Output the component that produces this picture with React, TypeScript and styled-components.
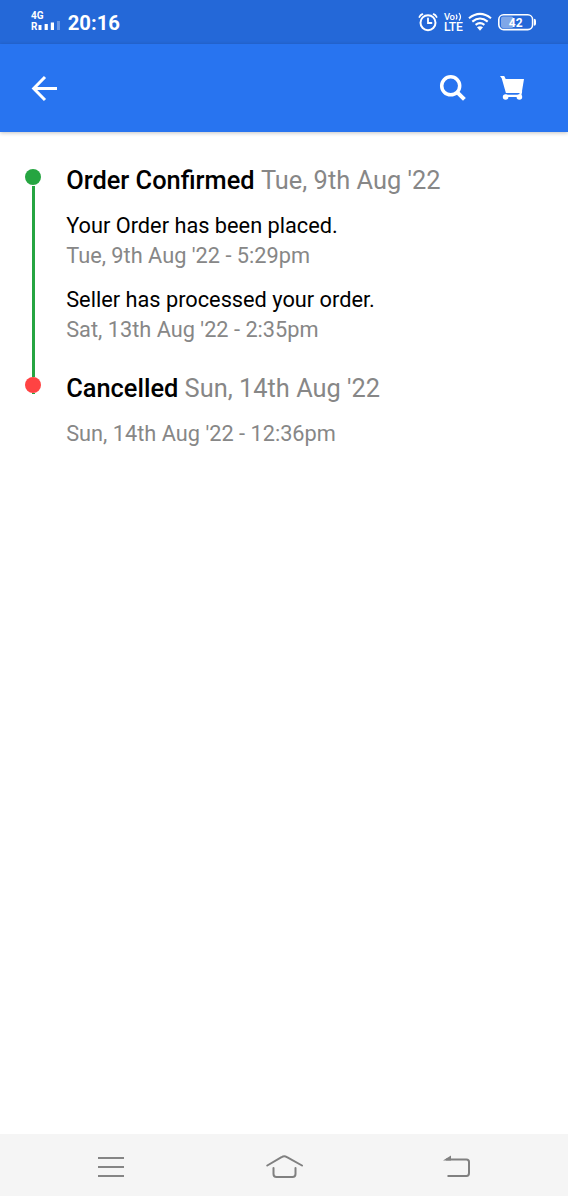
import React from "react";
import styled, { createGlobalStyle } from "styled-components";

const GlobalStyle = createGlobalStyle`
  *, *::before, *::after { box-sizing: border-box; }
  body { margin: 0; background: #fff; }
`;

const Screen = styled.div`
  width: 568px;
  height: 1200px;
  display: flex;
  flex-direction: column;
  padding-bottom: 4px;
  overflow: hidden;
  background: #fff;
  font-family: Roboto, "Liberation Sans", sans-serif;
`;

const StatusBar = styled.div`
  height: 44px;
  flex: none;
  display: flex;
  justify-content: space-between;
  padding: 0 30px 0 31px;
  background: #2468d8;
  color: #fff;
`;

const StatusGroup = styled.div`
  display: flex;
  align-items: flex-start;
`;

const Network = styled.div`
  display: flex;
  flex-direction: column;
  padding-top: 10px;
  font-size: 10px;
  line-height: 11px;
  font-weight: 700;
`;

const SignalRow = styled.div`
  display: flex;
  height: 11px;
`;

const Clock = styled.span`
  margin-left: 7.3px;
  padding-top: 11px;
  font-size: 20.3px;
  line-height: 24px;
  font-weight: 700;
`;

const Volte = styled.div`
  width: 20px;
  margin: 12px 4px 0 6.5px;
  font-size: 12.2px;
  line-height: 13px;
  font-weight: 500;
  letter-spacing: -0.3px;
  white-space: nowrap;
`;

const VolteTop = styled.div`
  display: flex;
  height: 9px;
  font-size: 9.5px;
  line-height: 9px;
`;

const Icon = styled.svg`
  display: block;
  flex: none;
`;

const BatteryIcon = styled(Icon)`
  margin-left: 6px;
`;

const AppBar = styled.header`
  height: 88px;
  flex: none;
  display: flex;
  justify-content: space-between;
  align-items: center;
  padding: 0 41px 0 29px;
  background: #2874f0;
  box-shadow: 0 1px 4px rgba(0, 0, 0, 0.24);
`;

const Actions = styled.div`
  display: flex;
  gap: 32px;
`;

const Content = styled.main`
  flex: 1;
  display: flex;
  padding: 32px 0 0 25px;
`;

const Rail = styled.div`
  width: 16px;
  flex: none;
  display: flex;
  flex-direction: column;
  align-items: center;
  padding-top: 5px;
`;

const Dot = styled.div<{ $color: string }>`
  width: 16px;
  height: 16px;
  flex: none;
  border-radius: 50%;
  background: ${(p) => p.$color};
`;

const Line = styled.div<{ $length: number; $gap?: number }>`
  width: 3px;
  height: ${(p) => p.$length}px;
  flex: none;
  margin-top: ${(p) => p.$gap ?? 0}px;
  background: #26a541;
`;

const Steps = styled.div`
  display: flex;
  flex-direction: column;
  gap: 27px;
  margin-left: 25.2px;
`;

const Step = styled.section`
  display: flex;
  flex-direction: column;
`;

const StepTitle = styled.h2`
  margin: 0 0 15px;
  font-size: 25.4px;
  line-height: 32px;
  font-weight: 500;
  color: #000;
  white-space: nowrap;
`;

const StepDate = styled.span`
  font-weight: 400;
  color: #878787;
`;

const Event = styled.div`
  font-size: 21.75px;
  line-height: 30px;
  white-space: nowrap;
  color: #000;
  & + & { margin-top: 14px; }
`;

const EventTime = styled.div`
  color: #878787;
`;

const NavBar = styled.nav`
  height: 62px;
  flex: none;
  display: flex;
  justify-content: space-between;
  padding: 18px 96px 0 97px;
  background: #f5f5f5;
`;

export default function App() {
  return (
    <Screen>
      <GlobalStyle />
      <StatusBar>
        <StatusGroup>
          <Network>
            <span>4G</span>
            <SignalRow>
              <span>R</span>
              <Icon width="23" height="11" viewBox="0 0 23 11" fill="#fff">
                <rect x="1.5" y="4" width="3" height="5" />
                <rect x="7.6" y="3" width="3.2" height="6" />
                <rect x="13.8" y="1.5" width="3.2" height="7.5" />
                <rect x="20" y="0" width="3" height="9" opacity=".3" />
              </Icon>
            </SignalRow>
          </Network>
          <Clock>20:16</Clock>
        </StatusGroup>
        <StatusGroup>
          <Icon width="20" height="44" viewBox="0 0 20 44" fill="none" stroke="#fff" strokeWidth="2" strokeLinecap="round">
            <circle cx="10" cy="22.7" r="7.5" />
            <path d="M1.4 17Q2.3 15 4.4 14.2M18.6 17Q17.7 15 15.6 14.2M10 18.5V23h3.5" strokeWidth="1.8" />
          </Icon>
          <Volte>
            <VolteTop>
              <span>Vo</span>
              <Icon width="8" height="10" viewBox="0 0 8 10" fill="none" stroke="#fff" strokeWidth="1.2">
                <path d="M1 2.5Q3 5 1 7.5M4 1Q7 5 4 8.5" />
              </Icon>
            </VolteTop>
            <div>LTE</div>
          </Volte>
          <Icon width="24" height="44" viewBox="0 0 24 44" fill="none" stroke="#fff" strokeWidth="2.1">
            <path d="M1 18.3Q12 9.5 23 18.3M4.3 21.6Q12 15.4 19.7 21.6M7.6 24.8Q12 21.4 16.4 24.8" />
            <path d="M9 27.3Q12 25 15 27.3L12 30.7Z" fill="#fff" stroke="none" />
          </Icon>
          <BatteryIcon width="40" height="44" viewBox="0 0 40 44">
            <rect x="3" y="16.5" width="12.5" height="11.5" rx="2" fill="#fff" opacity=".42" />
            <rect x=".8" y="14.8" width="33.8" height="14.8" rx="4.8" fill="none" stroke="#fff" strokeWidth="1.6" />
            <path d="M36 18.8q2 .2 2 2v3q0 1.8-2 2z" fill="#fff" />
            <text x="17.7" y="26.5" textAnchor="middle" fill="#fff" fontSize="12" fontWeight="700">42</text>
          </BatteryIcon>
        </StatusGroup>
      </StatusBar>
      <AppBar>
        <Icon width="30" height="30" viewBox="0 0 30 30" fill="none" stroke="#fff" strokeWidth="3">
          <path d="M28 15.5H5M16 4L4.7 15.5L16 27" />
        </Icon>
        <Actions>
          <Icon width="28" height="30" viewBox="0 0 28 30" fill="none" stroke="#fff" strokeWidth="3.5">
            <circle cx="11.7" cy="12.8" r="9" />
            <path d="M18.3 19.3L25.4 26.3" strokeWidth="4" />
          </Icon>
          <Icon width="28" height="30" viewBox="0 0 28 30" fill="#fff">
            <path d="M1 3h4.2l1.5 3H25L22.7 20H6.9L2.7 5.3z" />
            <path d="M6.2 22.8H21.8M22.1 18l-1 5" fill="none" stroke="#fff" strokeWidth="2.2" />
            <circle cx="6.6" cy="24" r="2.8" />
            <circle cx="20.4" cy="24" r="2.8" />
          </Icon>
        </Actions>
      </AppBar>
      <Content>
        <Rail>
          <Dot $color="#26a541" />
          <Line $length={191} $gap={1} />
          <Dot $color="#ff4343" />
          <Line $length={1} />
        </Rail>
        <Steps>
          <Step>
            <StepTitle>Order Confirmed <StepDate>Tue, 9th Aug '22</StepDate></StepTitle>
            <Event>
              Your Order has been placed.
              <EventTime>Tue, 9th Aug '22 - 5:29pm</EventTime>
            </Event>
            <Event>
              Seller has processed your order.
              <EventTime>Sat, 13th Aug '22 - 2:35pm</EventTime>
            </Event>
          </Step>
          <Step>
            <StepTitle>Cancelled <StepDate>Sun, 14th Aug '22</StepDate></StepTitle>
            <Event>
              <EventTime>Sun, 14th Aug '22 - 12:36pm</EventTime>
            </Event>
          </Step>
        </Steps>
      </Content>
      <NavBar>
        <Icon width="28" height="30" viewBox="0 0 28 30" fill="none" stroke="#858585" strokeWidth="2">
          <path d="M1 6H27M1 15H27M1 24H27" />
        </Icon>
        <Icon width="38" height="30" viewBox="0 0 38 30" fill="none" stroke="#808080" strokeWidth="2" strokeLinecap="round">
          <path d="M2.3 13.5L16.5 5.2Q19.3 3.2 22 5.2L37 13.5M8.5 16V22Q8.5 25 11.5 25H27.5Q30.5 25 30.5 22V16" />
        </Icon>
        <Icon width="30" height="30" viewBox="0 0 30 30" fill="none" stroke="#808080" strokeWidth="2">
          <path d="M4 7.5H24.5Q27 7.5 27 10V21Q27 24 24.5 24H5.5" />
          <path d="M1 8.5L9 3.5V8.5Z" fill="#808080" stroke="none" />
        </Icon>
      </NavBar>
    </Screen>
  );
}
